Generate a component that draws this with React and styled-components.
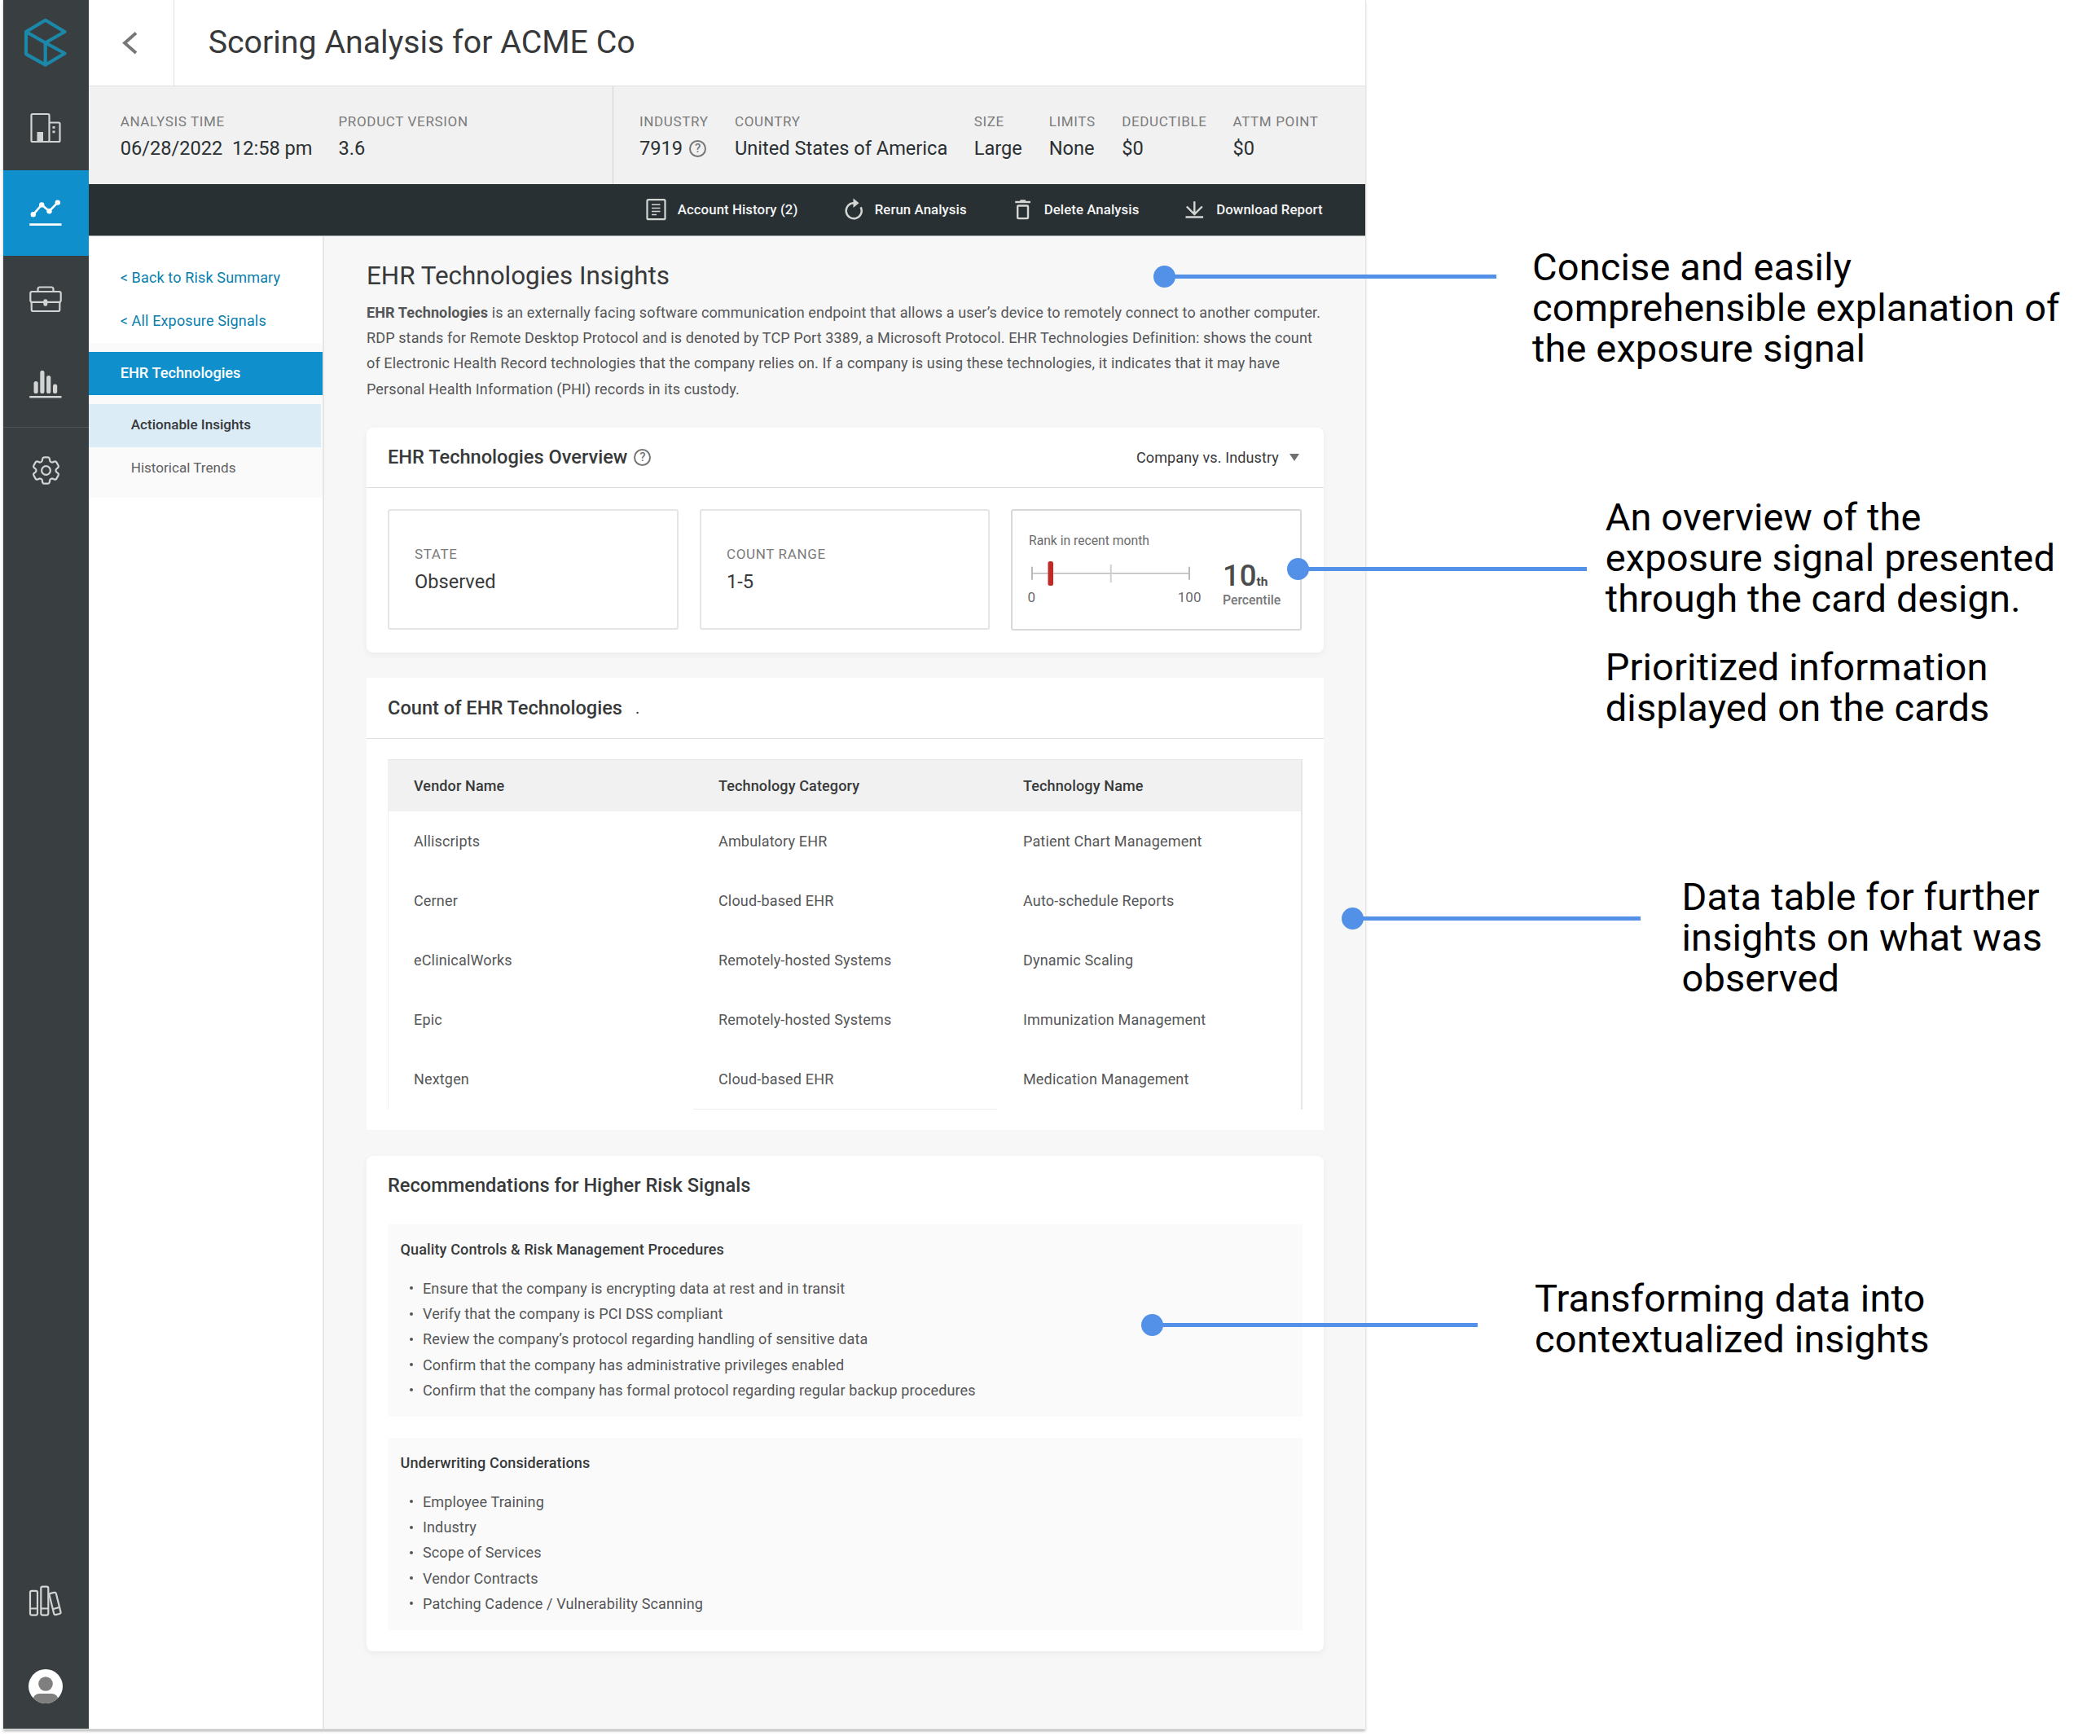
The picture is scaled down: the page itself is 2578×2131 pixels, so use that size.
import React from "react";
import styled, { createGlobalStyle, css } from "styled-components";
import { HiOutlineCog6Tooth } from "react-icons/hi2";

const GlobalStyle = createGlobalStyle`
  * { box-sizing: border-box; }
  html, body { margin: 0; padding: 0; background: #fff; }
  body { font-family: Roboto, "Liberation Sans", sans-serif; color: #37393a; }
  h1, h2, h3, h4, p, ul { margin: 0; padding: 0; font-weight: 400; }
  svg { display: block; overflow: visible; }
`;

const Canvas = styled.div`
  position: relative;
  width: 2578px;
  height: 2131px;
  overflow: hidden;
  background: #fff;
`;

const Window = styled.div`
  display: flex;
  width: 1672px;
  height: 2122px;
  margin-left: 4px;
  background: #fff;
  box-shadow: 0 0 0 1px #e6e6e6, 0 3px 3px rgba(0, 0, 0, 0.3);
`;

/* ---------- primary rail ---------- */

const Rail = styled.nav`
  display: flex;
  flex-direction: column;
  width: 104.7px;
  flex: none;
  background: #393e41;
  color: #d2d3d3;
`;

const RailItem = styled.div`
  display: flex;
  align-items: center;
  justify-content: center;
  height: ${(p) => p.$h || 105}px;
  flex: none;
  background: ${(p) => (p.$active ? "#0f8fcc" : "transparent")};
  color: ${(p) => (p.$active ? "#fff" : "inherit")};
  ${(p) => p.$line && css`border-top: 1px solid #4f5456;`}
  ${(p) => p.$last && css`margin-top: auto;`}
`;

/* ---------- header ---------- */

const Main = styled.div`
  display: flex;
  flex-direction: column;
  flex: 1;
  min-width: 0;
`;

const Header = styled.header`
  display: flex;
  height: 106px;
  flex: none;
  border-bottom: 1px solid #e0e0e0;
`;

const Back = styled.div`
  display: flex;
  align-items: center;
  width: 105px;
  padding-left: 41.5px;
  border-right: 1px solid #e0e0e0;
`;

const PageTitle = styled.h1`
  padding-left: 42px;
  font-size: 39.3px;
  line-height: 104px;
  color: #37393a;
  white-space: nowrap;
`;

const InfoBar = styled.div`
  display: flex;
  height: 120px;
  flex: none;
  background: #f1f1f1;
`;

const InfoGroup = styled.div`
  display: grid;
  grid-template-columns: ${(p) => p.$cols};
  align-content: start;
  width: ${(p) => p.$w};
  padding: 31px 0 0 ${(p) => p.$pad}px;
  ${(p) => p.$divided && css`border-left: 1px solid #d2d2d2;`}
`;

const Label = styled.div`
  font-size: 17px;
  line-height: 24px;
  letter-spacing: 0.65px;
  color: #7b7b7b;
  white-space: nowrap;
`;

const Value = styled.div`
  display: flex;
  align-items: center;
  margin-top: 6px;
  font-size: 23.6px;
  line-height: 30px;
  color: #2a3033;
  white-space: pre;
`;

const HelpMark = styled.span`
  display: inline-flex;
  align-items: center;
  justify-content: center;
  width: 21px;
  height: 21px;
  margin-left: 8px;
  border: 2px solid #757575;
  border-radius: 50%;
  font-size: 15px;
  font-weight: 500;
  line-height: 17px;
  color: #757575;
`;

const Toolbar = styled.div`
  display: grid;
  grid-template-columns: 242px 208px 211.5px auto;
  align-items: center;
  height: 64px;
  flex: none;
  padding-left: 686px;
  background: #283034;
  border-bottom: 1px solid #a4a7a8;
`;

const Action = styled.div`
  display: flex;
  align-items: center;
  margin-top: -1px;
  font-size: 16.8px;
  font-weight: 500;
  letter-spacing: 0.09px;
  line-height: 24px;
  color: #f4f4f4;
  white-space: nowrap;
  svg { flex: none; margin-right: 11px; color: #d4d6d4; }
`;

/* ---------- secondary nav ---------- */

const Body = styled.div`
  display: flex;
  flex: 1;
  min-height: 0;
`;

const Aside = styled.aside`
  width: 289.3px;
  flex: none;
  padding-top: 25px;
  border-right: 2px solid #e6e6e6;
`;

const SideLink = styled.div`
  height: 53px;
  padding-left: 39px;
  font-size: 18px;
  letter-spacing: 0.15px;
  line-height: 52px;
  color: #0b7fab;
  white-space: nowrap;
`;

const SideGroup = styled.div`
  height: 190px;
  padding-top: 11px;
  background: #fafafa;
`;

const SideCurrent = styled.div`
  height: 53px;
  padding-left: 39px;
  background: #0f8fcc;
  font-size: 18.2px;
  font-weight: 500;
  line-height: 52px;
  color: #fff;
`;

const SideSub = styled.div`
  height: 53px;
  margin: ${(p) => (p.$active ? "10.5px 2px 0 0" : "0")};
  padding-left: 52px;
  background: ${(p) => (p.$active ? "#dbecf7" : "transparent")};
  font-size: 17.1px;
  font-weight: ${(p) => (p.$active ? 500 : 400)};
  line-height: 50.5px;
  color: ${(p) => (p.$active ? "#37393a" : "#5f6061")};
`;

/* ---------- content ---------- */

const Content = styled.main`
  flex: 1;
  min-width: 0;
  padding: 28px 51.5px 0 52px;
  background: #f7f7f7;
`;

const SectionTitle = styled.h2`
  font-size: 31.4px;
  line-height: 42px;
  color: #37393a;
`;

const Description = styled.p`
  margin-top: 7.5px;
  font-size: 18px;
  letter-spacing: 0.125px;
  line-height: 31.4px;
  color: #555657;
  white-space: nowrap;
  strong { font-weight: 700; }
`;

const Card = styled.section`
  height: ${(p) => p.$h}px;
  margin-top: 31.5px;
  background: #fff;
  ${(p) =>
    p.$raised &&
    css`
      border-radius: 8px;
      box-shadow: 0 3px 8px rgba(0, 0, 0, 0.05);
    `}
`;

const CardHead = styled.div`
  display: flex;
  align-items: center;
  justify-content: space-between;
  height: ${(p) => p.$h}px;
  padding: 0 30px ${(p) => (p.$ruled ? 0 : 11)}px 26px;
  ${(p) => p.$ruled && css`border-bottom: 1px solid #dfdfdf;`}
`;

const CardTitle = styled.h3`
  display: flex;
  align-items: center;
  font-size: 23.6px;
  font-weight: 500;
  line-height: 30px;
  color: #37393a;
  white-space: nowrap;
`;

const Period = styled.span`
  margin-left: 16px;
  font-size: 20px;
  font-weight: 400;
`;

const Dropdown = styled.div`
  display: flex;
  align-items: center;
  font-size: 18px;
  letter-spacing: 0.12px;
  color: #37393a;
  white-space: nowrap;
`;

const Caret = styled.span`
  margin-left: 12.5px;
  border: 6.5px solid transparent;
  border-top: 9px solid #6f7071;
  border-bottom: 0;
`;

const Tiles = styled.div`
  display: grid;
  grid-template-columns: 357px 356px 357px;
  gap: 26px;
  padding: 26.5px 25px 0 26px;
`;

const Tile = styled.div`
  height: ${(p) => (p.$chart ? 149 : 148)}px;
  padding: ${(p) => (p.$chart ? "25px 0 0 20px" : "41px 0 0 31px")};
  border: ${(p) => (p.$chart ? "2px solid #d8d8d8" : "2px solid #e5e5e5")};
  border-radius: 3px;
`;

const TileValue = styled(Value)`
  margin-top: 6.5px;
  color: #37393a;
`;

const RankLabel = styled.div`
  font-size: 15.7px;
  line-height: 24px;
  color: #6a6b6c;
`;

const RankRow = styled.div`
  display: flex;
  align-items: flex-start;
`;

const Scale = styled.div`
  width: 218px;
  padding: 12px 0 0 3px;
`;

const ScaleEnds = styled.div`
  display: flex;
  justify-content: space-between;
  width: 213px;
  margin: 2px 0 0 -4.5px;
  font-size: 17px;
  line-height: 22px;
  color: #6a6b6c;
`;

const Score = styled.div`
  margin: 10px 0 0 20px;
  color: #4b4c4d;
`;

const ScoreNumber = styled.div`
  font-size: 36.5px;
  font-weight: 500;
  line-height: 42px;
  span { font-size: 15.5px; font-weight: 700; line-height: 1; }
`;

const ScoreCaption = styled.div`
  margin-top: -1px;
  font-size: 15.8px;
  font-weight: 500;
  line-height: 20px;
  color: #777879;
`;

/* ---------- table ---------- */

const Table = styled.div`
  width: 1123px;
  margin: 25px 0 0 26px;
  border: 1px solid #e6e6e6;
  border-width: 1px 2px 0 1px;
  border-left-color: #f0f0f0;
`;

const TableRow = styled.div`
  display: grid;
  grid-template-columns: 374px 374px 1fr;
  height: ${(p) => (p.$head ? 63 : 73)}px;
  background: ${(p) => (p.$head ? "#f1f1f1" : "#fff")};
`;

const Cell = styled.div`
  display: flex;
  align-items: center;
  padding: 0 0 1px 31px;
  font-size: 18px;
  letter-spacing: ${(p) => (p.$head ? 0.14 : 0.17)}px;
  font-weight: ${(p) => (p.$head ? 500 : 400)};
  color: ${(p) => (p.$head ? "#37393a" : "#555657")};
  white-space: nowrap;
`;

const TableEnd = styled.div`
  width: 373px;
  height: 1px;
  margin-left: 374px;
  background: #ececec;
`;

/* ---------- recommendations ---------- */

const Panel = styled.div`
  height: 236px;
  margin: 0 26px ${(p) => (p.$last ? 0 : 26)}px 26px;
  padding: 15.5px 0 0 15.5px;
  background: #fafafa;
`;

const PanelTitle = styled.h4`
  font-size: 18px;
  font-weight: 500;
  letter-spacing: 0.14px;
  line-height: 30px;
  color: #37393a;
`;

const List = styled.ul`
  margin-top: 17px;
  list-style: none;
`;

const Item = styled.li`
  display: flex;
  align-items: center;
  height: 31.3px;
  font-size: 18px;
  letter-spacing: 0.135px;
  color: #555657;
  white-space: nowrap;
  &::before {
    content: "";
    width: 4px;
    height: 4px;
    margin: 0 12px 0 11.5px;
    border-radius: 50%;
    background: #555657;
  }
`;

/* ---------- callouts laid over the window ---------- */

const Pointer = styled.div`
  position: absolute;
  left: ${(p) => p.$x - 13.5}px;
  top: ${(p) => p.$y - 13.5}px;
  display: flex;
  align-items: center;
  width: ${(p) => p.$end - p.$x + 13.5}px;
  height: 27px;
  &::before {
    content: "";
    width: 27px;
    height: 27px;
    border-radius: 50%;
    background: #5391e8;
  }
  &::after {
    content: "";
    flex: 1;
    height: 5px;
    margin-left: -2px;
    background: #5391e8;
  }
`;

const Note = styled.div`
  position: absolute;
  left: ${(p) => p.$x}px;
  top: ${(p) => p.$y}px;
  font-size: 47px;
  letter-spacing: 0.13px;
  line-height: 50px;
  color: #000;
  white-space: pre;
  p + p { margin-top: 34px; }
`;

/* ---------- drawings ---------- */

const Logo = () => (
  <svg width="52" height="60" viewBox="30 21 52 60" fill="none" stroke="#1b88aa" strokeWidth="4.2" strokeLinejoin="round">
    <path d="M55.7 51.5 79.5 38 55.7 23.8 32 38v27.3l23.7 13.4L79.5 64.5 55.7 51.5V78.5M32 38l23.7 13.5" />
  </svg>
);

const Building = () => (
  <svg width="38" height="38" viewBox="37.5 138 38 38" fill="none" stroke="currentColor" strokeWidth="2.2">
    <rect x="39" y="140" width="22" height="34" rx="1.5" />
    <path d="M61 150.500h11.500a1.500 1.500 0 0 1 1.500 1.500v20.500a1.500 1.500 0 0 1-1.500 1.500H61" />
    <path d="M46 162h7.500v12.500H46zM65 155h3v2.800h-3zM65 160.500h3v2.800h-3z" fill="currentColor" stroke="none" />
  </svg>
);

const Trend = () => (
  <svg width="40" height="34" viewBox="36.5 245 40 34" fill="none" stroke="currentColor" strokeWidth="2.6">
    <path d="M41.3 263.300 51.700 251.400 61 259.200 71.300 248.600M36.700 275.600H76" />
    <g fill="currentColor" stroke="none">
      <circle cx="41.3" cy="263.3" r="3.2" />
      <circle cx="51.7" cy="251.4" r="3.2" />
      <circle cx="61" cy="259.2" r="3.2" />
      <circle cx="71.3" cy="248.6" r="3.2" />
    </g>
  </svg>
);

const Briefcase = () => (
  <svg width="40" height="34" viewBox="36.5 350 40 34" fill="none" stroke="currentColor" strokeWidth="2.2">
    <rect x="37.8" y="358" width="37.4" height="12.8" rx="2" />
    <path d="M39.200 370.800v9.200a2 2 0 0 0 2 2h30.600a2 2 0 0 0 2-2v-9.200" />
    <path d="M47 357.500v-2.500a2.500 2.500 0 0 1 2.500-2.500h14a2.500 2.500 0 0 1 2.500 2.500v2.500" />
    <rect x="53.800" y="367.200" width="5" height="8.600" rx="2.400" fill="currentColor" stroke="none" />
  </svg>
);

const Bars = () => (
  <svg width="40" height="36" viewBox="36.5 454 40 36" fill="currentColor">
    <rect x="42" y="468" width="5.2" height="15" rx="2.6" />
    <rect x="49.8" y="454.800" width="5.2" height="28.2" rx="2.6" />
    <rect x="57.6" y="461" width="5.2" height="22" rx="2.6" />
    <rect x="65.500" y="471.500" width="5.2" height="11.500" rx="2.6" />
    <rect x="36.700" y="486" width="39.300" height="2.500" />
  </svg>
);

const Books = () => (
  <svg width="40" height="38" viewBox="36.5 1947 40 38" fill="none" stroke="currentColor" strokeWidth="2.200">
    <rect x="37.500" y="1953.800" width="9" height="29.800" rx="2" />
    <rect x="50.800" y="1948.600" width="9" height="35" rx="2" />
    <path d="M37.500 1975.500h9M50.800 1975.500h9M65.200 1976.300l7.500-2" />
    <rect x="63.800" y="1956" width="8.500" height="27" rx="2" transform="rotate(-14 68 1969.500)" />
  </svg>
);

const Avatar = () => (
  <svg width="42" height="42" viewBox="0 0 42 42">
    <defs>
      <clipPath id="avatar-disc"><circle cx="21" cy="21" r="21" /></clipPath>
    </defs>
    <circle cx="21" cy="21" r="21" fill="#fff" />
    <g fill="#7f7f7f" clipPath="url(#avatar-disc)">
      <circle cx="21" cy="18" r="8.800" />
      <rect x="5.500" y="30" width="31" height="16" rx="8" />
    </g>
  </svg>
);

const ChevronBack = () => (
  <svg width="20" height="30" viewBox="150 37 20 30" fill="none" stroke="#777" strokeWidth="3.8">
    <path d="M167 39.500 153 51.800 167 64" />
  </svg>
);

const HistoryIcon = () => (
  <svg width="26" height="28" viewBox="795 243 26 28" fill="none" stroke="currentColor">
    <rect x="794.500" y="245.200" width="22" height="24" rx="1.5" strokeWidth="2.2" />
    <path d="M800 251.300h10.500M800 255.500h10.500M800 259.500h10.500M800 263.500h6" strokeWidth="1.500" />
  </svg>
);

const RerunIcon = () => (
  <svg width="26" height="28" viewBox="1037 243 26 28" fill="none" stroke="currentColor" strokeWidth="2.500">
    <path d="M1049 249.300a9.500 9.500 0 1 0 7.600 5" />
    <path d="M1047.500 243.500v11.500l7-5.700z" fill="currentColor" stroke="none" />
  </svg>
);

const TrashIcon = () => (
  <svg width="26" height="28" viewBox="1245 243 26 28" fill="none" stroke="currentColor" strokeWidth="2.400">
    <path d="M1246.200 248h18.800" />
    <path d="M1251.500 248l1.200-2.800h6l1.200 2.800z" fill="currentColor" stroke="none" />
    <rect x="1249.200" y="252.500" width="12.800" height="15.600" rx="1" />
  </svg>
);

const DownloadIcon = () => (
  <svg width="26" height="28" viewBox="1456.500 243 26 28" fill="none" stroke="currentColor" strokeWidth="2.400">
    <path d="M1466.800 247.300v15.500M1457.300 253.500l9.500 9.600 9.500-9.600M1456 266.500h21.600" />
  </svg>
);

const RankScale = () => (
  <svg width="196" height="32" viewBox="1267 689 196 32" fill="none" stroke="#b9b9b9" strokeWidth="2">
    <path d="M1268 704.800h193" strokeWidth="1.500" />
    <path d="M1268 696.700v16M1461 696.700v16" />
    <path d="M1364.700 694v22" stroke="#cfcfcf" />
    <rect x="1287.500" y="690" width="6.500" height="30" rx="2.500" fill="#c22a26" stroke="none" />
  </svg>
);

/* ---------- data ---------- */

const runInfo = [
  ["ANALYSIS TIME", "06/28/2022  12:58 pm"],
  ["PRODUCT VERSION", "3.6"],
];

const accountInfo = [
  ["INDUSTRY", "7919", true],
  ["COUNTRY", "United States of America"],
  ["SIZE", "Large"],
  ["LIMITS", "None"],
  ["DEDUCTIBLE", "$0"],
  ["ATTM POINT", "$0"],
];

const columns = ["Vendor Name", "Technology Category", "Technology Name"];

const vendors = [
  ["Alliscripts", "Ambulatory EHR", "Patient Chart Management"],
  ["Cerner", "Cloud-based EHR", "Auto-schedule Reports"],
  ["eClinicalWorks", "Remotely-hosted Systems", "Dynamic Scaling"],
  ["Epic", "Remotely-hosted Systems", "Immunization Management"],
  ["Nextgen", "Cloud-based EHR", "Medication Management"],
];

const recommendations = [
  {
    title: "Quality Controls & Risk Management Procedures",
    items: [
      "Ensure that the company is encrypting data at rest and in transit",
      "Verify that the company is PCI DSS compliant",
      "Review the company’s protocol regarding handling of sensitive data",
      "Confirm that the company has administrative privileges enabled",
      "Confirm that the company has formal protocol regarding regular backup procedures",
    ],
  },
  {
    title: "Underwriting Considerations",
    items: [
      "Employee Training",
      "Industry",
      "Scope of Services",
      "Vendor Contracts",
      "Patching Cadence / Vulnerability Scanning",
    ],
  },
];

const Info = ({ label, value, help }) => (
  <div>
    <Label>{label}</Label>
    <Value>
      {value}
      {help && <HelpMark>?</HelpMark>}
    </Value>
  </div>
);

export default function App() {
  return (
    <Canvas>
      <GlobalStyle />
      <Window>
        <Rail>
          <RailItem $h={104}><Logo /></RailItem>
          <RailItem><Building /></RailItem>
          <RailItem $active><Trend /></RailItem>
          <RailItem><Briefcase /></RailItem>
          <RailItem><Bars /></RailItem>
          <RailItem $line><HiOutlineCog6Tooth size={43} strokeWidth={1.25} /></RailItem>
          <RailItem $last><Books /></RailItem>
          <RailItem><Avatar /></RailItem>
        </Rail>

        <Main>
          <Header>
            <Back><ChevronBack /></Back>
            <PageTitle>Scoring Analysis for ACME Co</PageTitle>
          </Header>

          <InfoBar>
            <InfoGroup $cols="267.8px auto" $w="643px" $pad={39}>
              {runInfo.map(([l, v]) => <Info key={l} label={l} value={v} />)}
            </InfoGroup>
            <InfoGroup $divided $cols="117px 293.7px 92px 89.5px 136.3px auto" $w="auto" $pad={32.3}>
              {accountInfo.map(([l, v, h]) => <Info key={l} label={l} value={v} help={h} />)}
            </InfoGroup>
          </InfoBar>

          <Toolbar>
            <Action><HistoryIcon />Account History (2)</Action>
            <Action><RerunIcon />Rerun Analysis</Action>
            <Action><TrashIcon />Delete Analysis</Action>
            <Action><DownloadIcon />Download Report</Action>
          </Toolbar>

          <Body>
            <Aside>
              <SideLink>&lt; Back to Risk Summary</SideLink>
              <SideLink>&lt; All Exposure Signals</SideLink>
              <SideGroup>
                <SideCurrent>EHR Technologies</SideCurrent>
                <SideSub $active>Actionable Insights</SideSub>
                <SideSub>Historical Trends</SideSub>
              </SideGroup>
            </Aside>

            <Content>
              <SectionTitle>EHR Technologies Insights</SectionTitle>
              <Description>
                <strong>EHR Technologies</strong> is an externally facing software communication endpoint that allows a user’s device to remotely connect to another computer.<br />
                RDP stands for Remote Desktop Protocol and is denoted by TCP Port 3389, a Microsoft Protocol. EHR Technologies Definition: shows the count<br />
                of Electronic Health Record technologies that the company relies on. If a company is using these technologies, it indicates that it may have<br />
                Personal Health Information (PHI) records in its custody.
              </Description>

              <Card $raised $h={276}>
                <CardHead $ruled $h={74}>
                  <CardTitle>EHR Technologies Overview<HelpMark>?</HelpMark></CardTitle>
                  <Dropdown>Company vs. Industry<Caret /></Dropdown>
                </CardHead>
                <Tiles>
                  <Tile>
                    <Label>STATE</Label>
                    <TileValue>Observed</TileValue>
                  </Tile>
                  <Tile>
                    <Label>COUNT RANGE</Label>
                    <TileValue>1-5</TileValue>
                  </Tile>
                  <Tile $chart>
                    <RankLabel>Rank in recent month</RankLabel>
                    <RankRow>
                      <Scale>
                        <RankScale />
                        <ScaleEnds><span>0</span><span>100</span></ScaleEnds>
                      </Scale>
                      <Score>
                        <ScoreNumber>10<span>th</span></ScoreNumber>
                        <ScoreCaption>Percentile</ScoreCaption>
                      </Score>
                    </RankRow>
                  </Tile>
                </Tiles>
              </Card>

              <Card $h={555}>
                <CardHead $ruled $h={75}>
                  <CardTitle>Count of EHR Technologies<Period>.</Period></CardTitle>
                </CardHead>
                <Table>
                  <TableRow $head>
                    {columns.map((c) => <Cell $head key={c}>{c}</Cell>)}
                  </TableRow>
                  {vendors.map((row) => (
                    <TableRow key={row[0]}>
                      {row.map((c) => <Cell key={c}>{c}</Cell>)}
                    </TableRow>
                  ))}
                  <TableEnd />
                </Table>
              </Card>

              <Card $raised $h={608.5}>
                <CardHead $h={84.5}>
                  <CardTitle>Recommendations for Higher Risk Signals</CardTitle>
                </CardHead>
                {recommendations.map((r, i) => (
                  <Panel key={r.title} $last={i === recommendations.length - 1}>
                    <PanelTitle>{r.title}</PanelTitle>
                    <List>
                      {r.items.map((t) => <Item key={t}>{t}</Item>)}
                    </List>
                  </Panel>
                ))}
              </Card>
            </Content>
          </Body>
        </Main>
      </Window>

      <Pointer $x={1429} $y={339} $end={1837} />
      <Note $x={1881} $y={303}>
        <p>{"Concise and easily\ncomprehensible explanation of\nthe exposure signal"}</p>
      </Note>

      <Pointer $x={1593} $y={698} $end={1948} />
      <Note $x={1970.7} $y={609.5}>
        <p>{"An overview of the\nexposure signal presented\nthrough the card design."}</p>
        <p>{"Prioritized information\ndisplayed on the cards"}</p>
      </Note>

      <Pointer $x={1660} $y={1127} $end={2014} />
      <Note $x={2064.5} $y={1076}>
        <p>{"Data table for further\ninsights on what was\nobserved"}</p>
      </Note>

      <Pointer $x={1414} $y={1626} $end={1814} />
      <Note $x={1884} $y={1569}>
        <p>{"Transforming data into\ncontextualized insights"}</p>
      </Note>
    </Canvas>
  );
}
